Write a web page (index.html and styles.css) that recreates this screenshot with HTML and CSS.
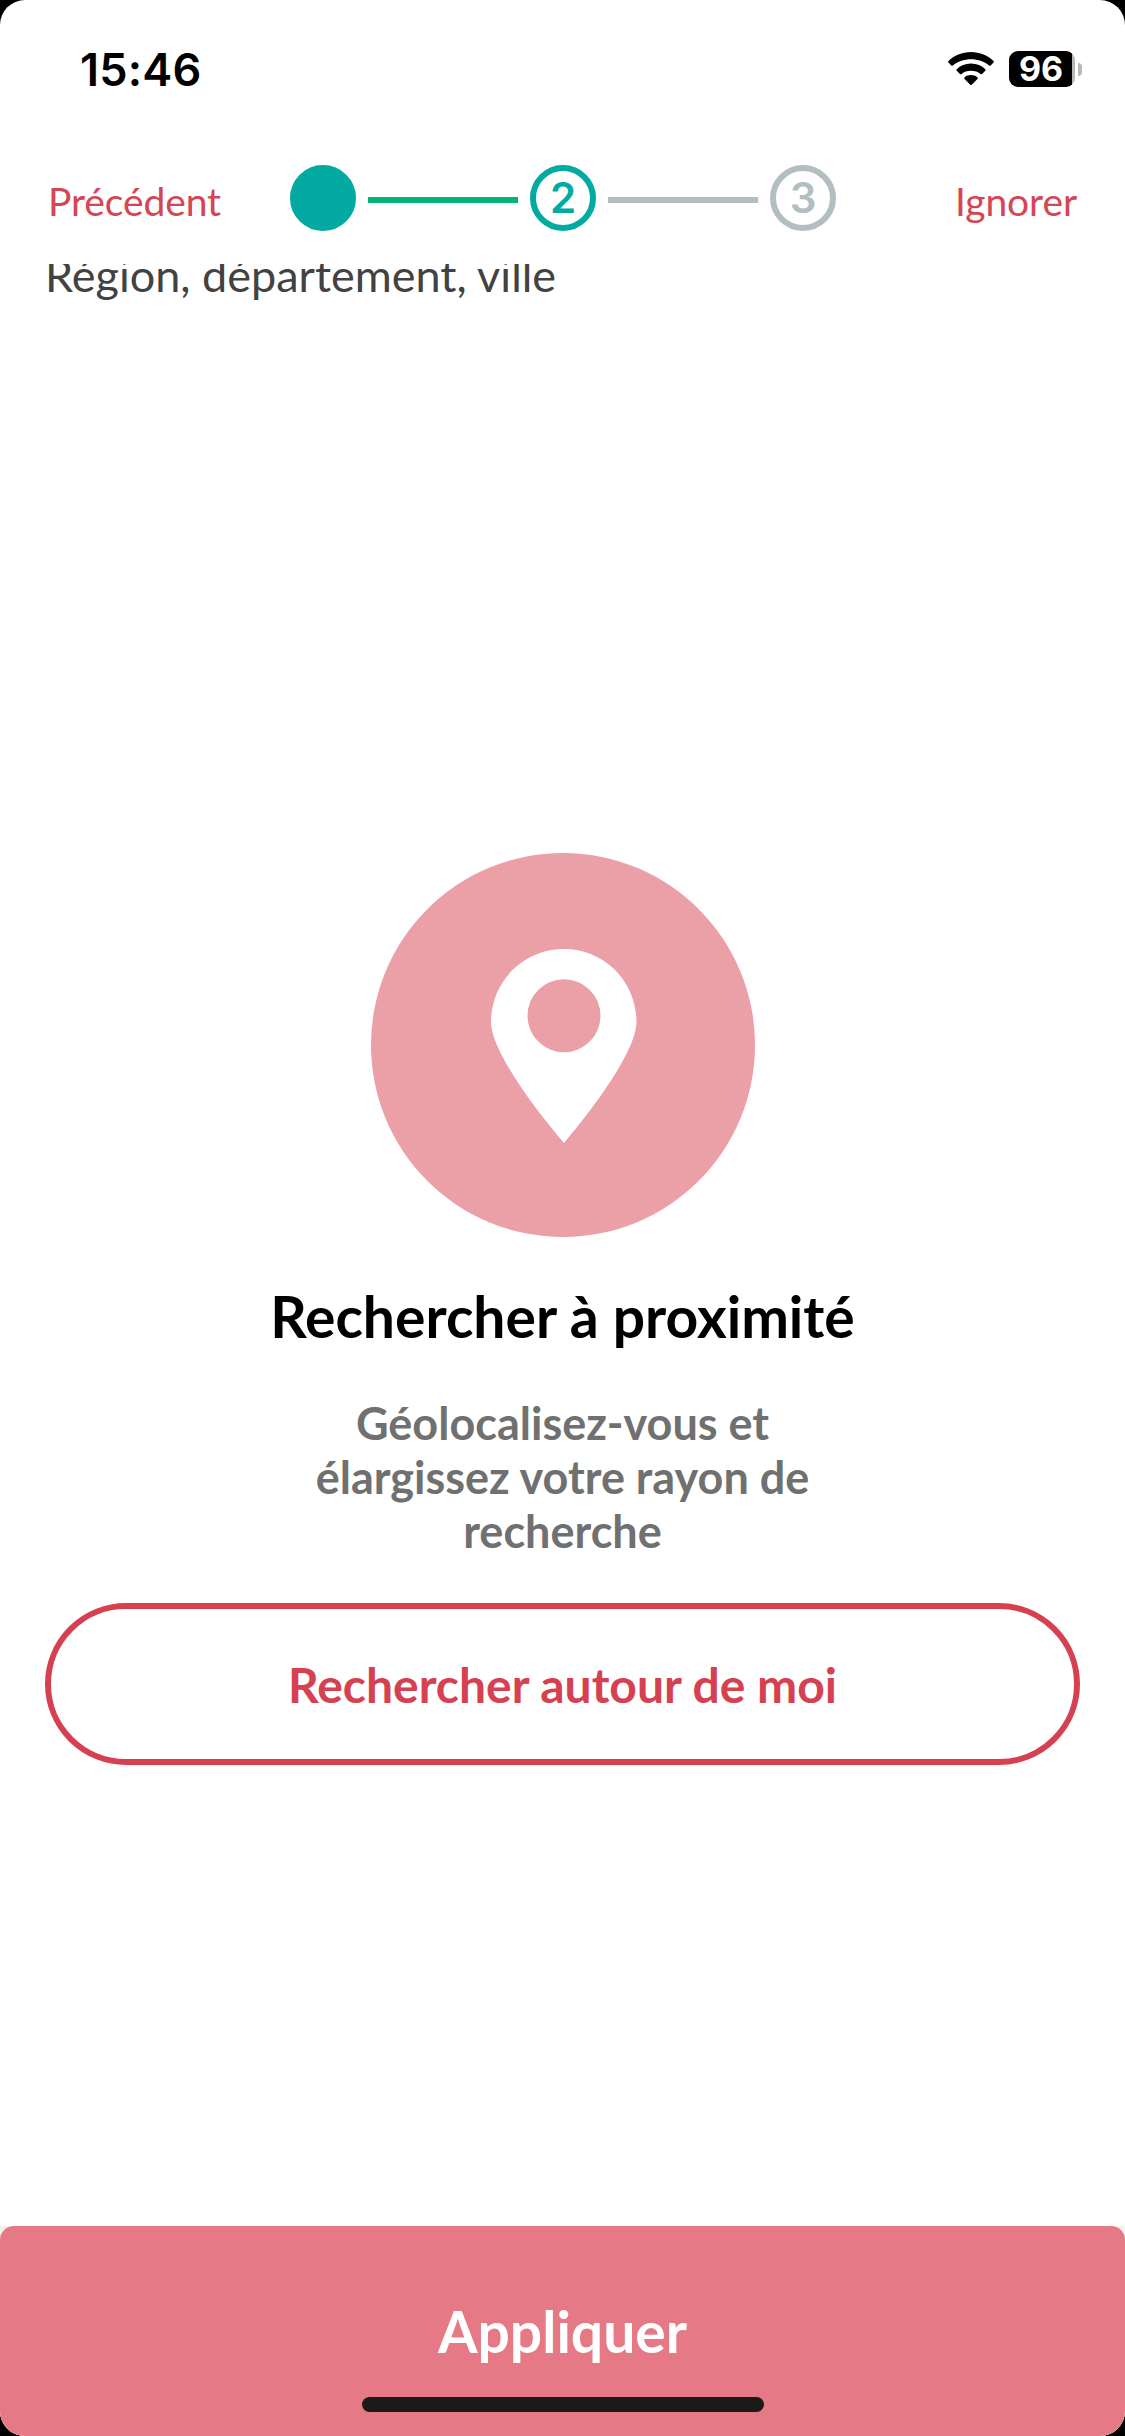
FILE: index.html
```html
<!DOCTYPE html>
<html lang="fr">
<head>
<meta charset="utf-8">
<title>Rechercher à proximité</title>
<link rel="stylesheet" href="styles.css">
</head>
<body>
<div class="screen">
  <div class="status">
    <span class="time">15:46</span>
    <div class="indicators">
      <svg class="wifi" width="46" height="34" viewBox="0 0 46 34">
        <path d="M23 0C32 0 40 3.500 45.500 9Q46.200 9.800 45.500 10.600L42.700 13.400Q41.900 14.100 41.100 13.400C36.200 9.400 29.800 7.200 23 7.200S9.800 9.400 4.900 13.400Q4.100 14.100 3.300 13.400L.5 10.600Q-.2 9.800.5 9C6 3.500 14 0 23 0Z"/>
        <path d="M23 11.500C28.800 11.500 33.700 13.700 37.300 17.200Q38 18 37.300 18.700L34 22Q33.300 22.700 32.500 22C29.900 19.900 26.800 18.800 23 18.800S16.100 19.900 13.500 22Q12.700 22.700 12 22L8.700 18.700Q8 18 8.700 17.200C12.300 13.700 17.200 11.500 23 11.500Z"/>
        <path d="M23 23C25.600 23 27.700 23.800 29.500 25.400Q30.200 26.100 29.500 26.900L23.700 32.700Q23 33.400 22.300 32.700L16.500 26.900Q15.800 26.100 16.500 25.400C18.300 23.800 20.400 23 23 23Z"/>
      </svg>
      <div class="battery">96</div>
      <span class="nub"></span>
    </div>
  </div>

  <header class="header">
    <a class="nav prev">Précédent</a>
    <div class="steps">
      <span class="step done"></span>
      <span class="bar bar-done"></span>
      <span class="step current">2</span>
      <span class="bar"></span>
      <span class="step">3</span>
    </div>
    <a class="nav skip">Ignorer</a>
  </header>

  <main class="content">
    <div class="field">Région, département, ville</div>
    <svg class="pin" width="384" height="384" viewBox="0 0 384 384">
      <circle cx="192" cy="192" r="192" fill="#eb9fa7"/>
      <path fill="#fff" fill-rule="evenodd" d="M193 96C233 96 265.500 128 265.500 169C265.500 197 223 255 193 290C163 255 120 197 120 169C120 128 153 96 193 96ZM193 126.200A36.500 36.500 0 1 0 193 199.200A36.500 36.500 0 1 0 193 126.200Z"/>
    </svg>
    <h1 class="title">Rechercher à proximité</h1>
    <p class="subtitle">Géolocalisez-vous et<br>élargissez votre rayon de<br>recherche</p>
    <button class="outline">Rechercher autour de moi</button>
  </main>

  <footer class="footer">
    <button class="apply">
      <span class="apply-label">Appliquer</span>
      <span class="home"></span>
    </button>
  </footer>
</div>
</body>
</html>
```
FILE: styles.css
```css
* { box-sizing: border-box; }

body {
  margin: 0;
  background: #000;
  font-family: Lato, "Liberation Sans", sans-serif;
}

button {
  margin: 0;
  padding: 0;
  border: 0;
  font: inherit;
}

.screen {
  display: flex;
  flex-direction: column;
  width: 1125px;
  height: 2436px;
  overflow: hidden;
  background: #fff;
  border-radius: 25px;
}

.status {
  display: flex;
  justify-content: space-between;
  height: 147px;
  padding: 51px 43px 0 80px;
  font-family: Inter, "Liberation Sans", sans-serif;
  font-weight: 600;
}

.time {
  height: 36px;
  font-size: 45px;
  letter-spacing: 0.2px;
  line-height: 37px;
}

.indicators {
  display: flex;
  align-items: center;
  height: 36px;
}

.wifi { margin-right: 15px; }

.battery {
  width: 66px;
  height: 36px;
  padding-right: 2px;
  border-radius: 9px;
  background: linear-gradient(90deg, #000 63px, #b8b8b8 63px);
  color: #fff;
  font-size: 34px;
  font-weight: 700;
  line-height: 36px;
  text-align: center;
}

.nub {
  width: 4px;
  height: 13px;
  margin: 0 0 0 3px;
  border-radius: 0 5px 5px 0;
  background: #b8b8b8;
}

.header {
  display: grid;
  grid-template-columns: 242px 546px 1fr;
  height: 117px;
  padding: 18px 48px 0;
}

.nav {
  padding-top: 12px;
  color: #d64553;
  font-size: 39px;
  letter-spacing: -0.1px;
  line-height: 48px;
}

.skip { text-align: right; }

.steps {
  display: flex;
  align-items: center;
  gap: 12px;
  height: 66px;
}

.step {
  width: 66px;
  height: 66px;
  border: 6px solid #b3bec1;
  border-radius: 50%;
  color: #b3bec1;
  font: 600 42px/53px Inter, "Liberation Sans", sans-serif;
  text-align: center;
}

.current {
  border-color: #03aaa1;
  color: #03aaa1;
}

.done {
  border-color: #03aaa1;
  background: #03aaa1;
}

.bar {
  width: 150px;
  height: 6px;
  margin-top: 3px;
  background: #b3bec1;
}

.bar-done { background: #04b37c; }

/* The scrolled field is cut off by the top edge of this area. */
.content {
  display: flex;
  flex-direction: column;
  align-items: center;
  height: 1962px;
  padding: 0 45px;
  overflow: hidden;
}

.field {
  align-self: stretch;
  height: 54px;
  margin-top: -16px;
  color: #424242;
  font-size: 45px;
  line-height: 54px;
}

.pin {
  flex: none;
  margin: 551px 0 43px 1px;
}

.title {
  margin: 0 0 44px;
  font-size: 57px;
  font-weight: 700;
  line-height: 72px;
}

.subtitle {
  margin: 0 0 45px;
  color: #707070;
  font-size: 45px;
  font-weight: 700;
  line-height: 54px;
  text-align: center;
}

.outline {
  width: 1035px;
  height: 162px;
  border: 6px solid #d64151;
  border-radius: 81px;
  background: #fff;
  color: #d64151;
  font-size: 48px;
  font-weight: 700;
}

.footer {
  height: 210px;
  background: #f2f2f2;
}

.apply {
  display: flex;
  flex-direction: column;
  align-items: center;
  width: 1125px;
  height: 210px;
  padding-top: 71px;
  border-radius: 14px 14px 0 0;
  background: #e67986;
  color: #fff;
}

.apply-label {
  font-size: 57px;
  font-weight: 700;
  line-height: 68px;
}

.home {
  width: 402px;
  height: 15px;
  margin-top: 32px;
  border-radius: 8px;
  background: #1a1a18;
}
```
